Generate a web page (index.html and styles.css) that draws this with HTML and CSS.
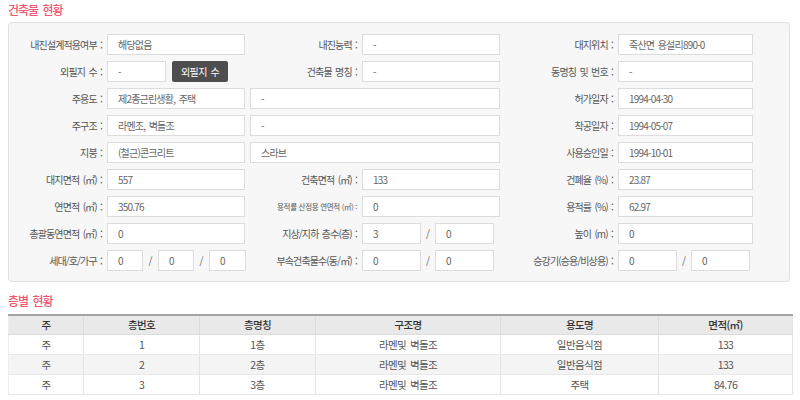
FILE: index.html
```html
<!DOCTYPE html>
<html lang="ko">
<head>
<meta charset="utf-8">
<link rel="stylesheet" href="styles.css">
</head>
<body>
<h2 class="sec-title">건축물 현황</h2>
<div class="panel">
  <div class="lbl">내진설계적용여부 :</div><div class="inp">해당없음</div>
  <div class="lbl">내진능력 :</div><div class="inp">-</div>
  <div class="lbl">대지위치 :</div><div class="inp">죽산면 용설리890-0</div>

  <div class="lbl">외필지 수 :</div>
  <div class="combo"><div class="inp w59">-</div><button class="btn">외필지 수</button></div>
  <div class="lbl">건축물 명칭 :</div><div class="inp">-</div>
  <div class="lbl">동명칭 및 번호 :</div><div class="inp">-</div>

  <div class="lbl">주용도 :</div><div class="inp">제2종근린생활, 주택</div>
  <div class="inp wide">-</div>
  <div class="lbl">허가일자 :</div><div class="inp">1994-04-30</div>

  <div class="lbl">주구조 :</div><div class="inp">라멘조, 벽돌조</div>
  <div class="inp wide">-</div>
  <div class="lbl">착공일자 :</div><div class="inp">1994-05-07</div>

  <div class="lbl">지붕 :</div><div class="inp">(철근)콘크리트</div>
  <div class="inp wide">스라브</div>
  <div class="lbl">사용승인일 :</div><div class="inp">1994-10-01</div>

  <div class="lbl">대지면적 (㎡) :</div><div class="inp">557</div>
  <div class="lbl">건축면적 (㎡) :</div><div class="inp">133</div>
  <div class="lbl">건폐율 (%) :</div><div class="inp">23.87</div>

  <div class="lbl">연면적 (㎡) :</div><div class="inp">350.76</div>
  <div class="lbl small">용적률 산정용 연면적 (㎡) :</div><div class="inp">0</div>
  <div class="lbl">용적률 (%) :</div><div class="inp">62.97</div>

  <div class="lbl">총괄동연면적 (㎡) :</div><div class="inp">0</div>
  <div class="lbl">지상/지하 층수(층) :</div>
  <div class="combo"><div class="inp w59">3</div><span class="sl">/</span><div class="inp w59">0</div></div>
  <div class="lbl">높이 (m) :</div><div class="inp">0</div>

  <div class="lbl">세대/호/가구 :</div>
  <div class="combo tri"><div class="inp w36">0</div><span class="sl">/</span><div class="inp w36">0</div><span class="sl">/</span><div class="inp w37">0</div></div>
  <div class="lbl">부속건축물수(동/㎡) :</div>
  <div class="combo"><div class="inp w59">0</div><span class="sl">/</span><div class="inp w59">0</div></div>
  <div class="lbl">승강기(승용/비상용) :</div>
  <div class="combo"><div class="inp w59">0</div><span class="sl">/</span><div class="inp w59">0</div></div>
</div>

<h2 class="sec-title second">층별 현황</h2>
<table class="floors">
  <colgroup>
    <col class="c1"><col class="c2"><col class="c3"><col class="c4"><col class="c5"><col class="c6">
  </colgroup>
  <thead>
    <tr><th>주</th><th>층번호</th><th>층명칭</th><th>구조명</th><th>용도명</th><th>면적(㎡)</th></tr>
  </thead>
  <tbody>
    <tr><td>주</td><td>1</td><td>1층</td><td>라멘및 벽돌조</td><td>일반음식점</td><td>133</td></tr>
    <tr><td>주</td><td>2</td><td>2층</td><td>라멘및 벽돌조</td><td>일반음식점</td><td>133</td></tr>
    <tr><td>주</td><td>3</td><td>3층</td><td>라멘및 벽돌조</td><td>주택</td><td>84.76</td></tr>
  </tbody>
</table>
</body>
</html>
```
FILE: styles.css
```css
* { box-sizing: border-box; }
html, body { margin: 0; padding: 0; background: #fff; }
body {
  font-family: "Noto Sans CJK KR", "Noto Sans", sans-serif;
  font-size: 10px;
  color: #555;
  width: 800px;
}
.sec-title {
  margin: 0 0 0 8px;
  height: 20px;
  line-height: 20px;
  font-size: 12px;
  letter-spacing: -1px;
  word-spacing: 2px;
  font-weight: 500;
  color: #f0566f;
}
.sec-title.second { margin-top: 9px; }
.panel {
  margin: 2px 0 0 8px;
  width: 782px;
  background: #f7f7f7;
  border: 1px solid #e0e0e0;
  border-radius: 4px;
  padding: 11px 0 10px 0;
  display: grid;
  grid-template-columns: 93px 138px 107px 138px 108px 135px;
  grid-auto-rows: 21px;
  column-gap: 5px;
  row-gap: 6px;
}
.lbl {
  text-align: right;
  line-height: 21px;
  white-space: nowrap;
  color: #555;
  font-size: 10px;
  letter-spacing: -0.9px;
  word-spacing: 1.5px;
}
.lbl.small { font-size: 7.5px; letter-spacing: -0.3px; word-spacing: 0; }
.inp {
  height: 21px;
  background: #fff;
  border: 1px solid #dcdcdc;
  padding-left: 10px;
  line-height: 19px;
  color: #666;
  font-size: 10px;
  letter-spacing: -0.8px;
  word-spacing: 1.5px;
  white-space: nowrap;
  overflow: hidden;
}
.inp.wide { grid-column: span 2; }
.combo { display: flex; align-items: center; }
.inp.w59 { width: 59px; flex: none; }
.inp.w36 { width: 36px; flex: none; }
.inp.w37 { width: 37px; flex: none; }
.sl {
  width: 14px;
  flex: none;
  text-align: center;
  color: #666;
}
.combo.tri { justify-content: space-between; }
.combo.tri .sl { width: 15px; }
.btn {
  margin-left: 6px;
  width: 56px;
  height: 21px;
  border: 0;
  border-radius: 2px;
  background: #4e4e4e;
  color: #fff;
  font-family: inherit;
  font-size: 10px;
  letter-spacing: -0.6px;
  word-spacing: 1.5px;
  padding: 0;
}
.floors {
  margin: 3px 0 0 8px;
  width: 784px;
  border-collapse: collapse;
  table-layout: fixed;
  border-top: 2px solid #a5a5a5;
  border-right: 1px solid #e3e3e3;
  border-left: 1px solid #eeeeee;
}
.c1 { width: 75px; } .c2 { width: 116px; } .c3 { width: 116px; }
.c4 { width: 185px; } .c5 { width: 158px; } .c6 { width: 134px; }
.floors th {
  height: 19px;
  background: #e9e9e9;
  color: #333;
  font-weight: 500;
  font-size: 10.5px;
  letter-spacing: -0.6px;
  border-left: 1px solid #dcdcdc;
  border-bottom: 1px solid #dcdcdc;
  padding: 0;
}
.floors td {
  height: 20px;
  text-align: center;
  color: #555;
  font-size: 10.5px;
  letter-spacing: -0.6px;
  word-spacing: 1.5px;
  border-left: 1px solid #e3e3e3;
  border-bottom: 1px solid #e8e8e8;
  padding: 0;
}
.floors th:first-child, .floors td:first-child { border-left: 0; }
.floors tbody tr:nth-child(2) td { background: #f4f4f4; }
```
